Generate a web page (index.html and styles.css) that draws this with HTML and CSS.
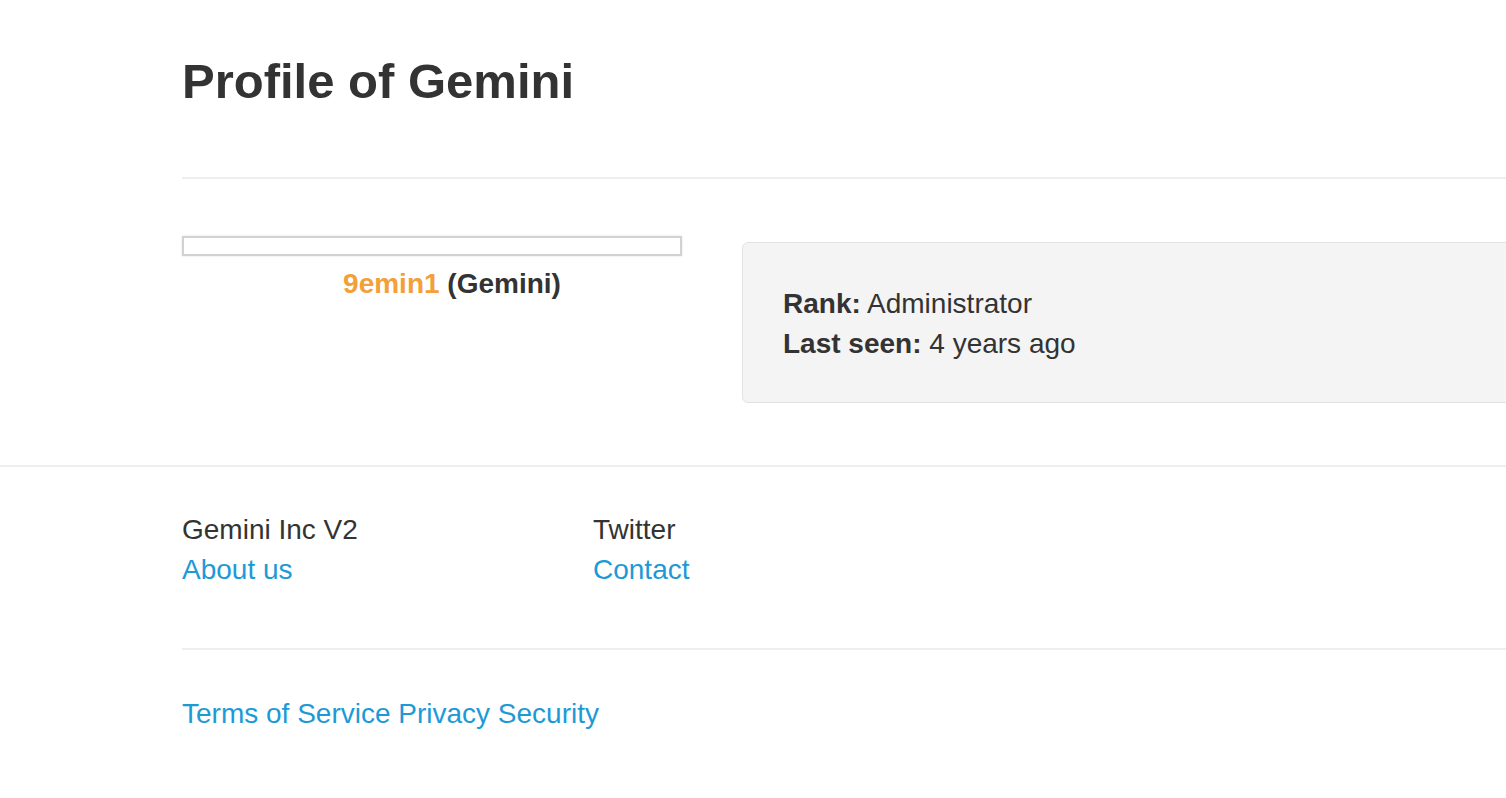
FILE: index.html
```html
<!DOCTYPE html>
<html lang="en">
<head>
<meta charset="utf-8">
<title>Profile of Gemini</title>
<link rel="stylesheet" href="styles.css">
</head>
<body>
<main class="container">
  <header class="page-header">
    <h1 class="title">Profile of Gemini</h1>
  </header>
  <section class="profile">
    <div class="profile-side">
      <div class="avatar"></div>
      <div class="name"><span class="handle">9emin1</span> (Gemini)</div>
    </div>
    <div class="well">
      <div><strong>Rank:</strong> Administrator</div>
      <div><strong>Last seen:</strong> 4 years ago</div>
    </div>
  </section>
</main>
<footer class="footer">
  <div class="footer-inner">
    <div class="footer-cols">
      <div class="footer-col">
        <div>Gemini Inc V2</div>
        <a href="#">About us</a>
      </div>
      <div class="footer-col">
        <div>Twitter</div>
        <a href="#">Contact</a>
      </div>
    </div>
    <div class="footer-bottom">
      <a href="#">Terms of Service</a> <a href="#">Privacy</a> <a href="#">Security</a>
    </div>
  </div>
</footer>
</body>
</html>
```

FILE: styles.css
```css
html, body {
  margin: 0;
  padding: 0;
  overflow: hidden;
  background: #fff;
}
body {
  font-family: "Liberation Sans", Arial, sans-serif;
  font-size: 28px;
  line-height: 40px;
  color: #333;
  width: 1506px;
  height: 798px;
}
a {
  color: #1d9ad6;
  text-decoration: none;
}
.container {
  margin-left: 182px;
  width: 1340px;
  padding-top: 55px;
}
.page-header {
  border-bottom: 2px solid #eee;
  padding-bottom: 70px;
}
.title {
  margin: 0;
  font-size: 49px;
  line-height: 52px;
  font-weight: bold;
  color: #333;
}
.profile {
  display: flex;
  align-items: flex-start;
  padding-top: 57px;
}
.profile-side {
  width: 540px;
  flex: none;
}
.avatar {
  width: 496px;
  height: 16px;
  border: 2px solid #d2d2d2;
  box-shadow: 0 0 2px rgba(0, 0, 0, 0.12);
  background: #fff;
}
.name {
  margin-top: 8px;
  text-align: center;
  font-weight: bold;
}
.handle {
  color: #f2a037;
}
.well {
  margin-left: 20px;
  margin-top: 6px;
  flex: 1;
  background: #f4f4f4;
  border: 1px solid #e3e3e3;
  border-radius: 6px;
  padding: 41px 40px 38px;
}
.footer {
  margin-top: 62px;
  border-top: 2px solid #eee;
}
.footer-inner {
  margin-left: 182px;
  width: 1340px;
}
.footer-cols {
  display: flex;
  padding-top: 43px;
  padding-bottom: 58px;
  border-bottom: 2px solid #eee;
}
.footer-col {
  width: 411px;
  display: flex;
  flex-direction: column;
  align-items: flex-start;
}
.footer-bottom {
  padding-top: 44px;
}
```
